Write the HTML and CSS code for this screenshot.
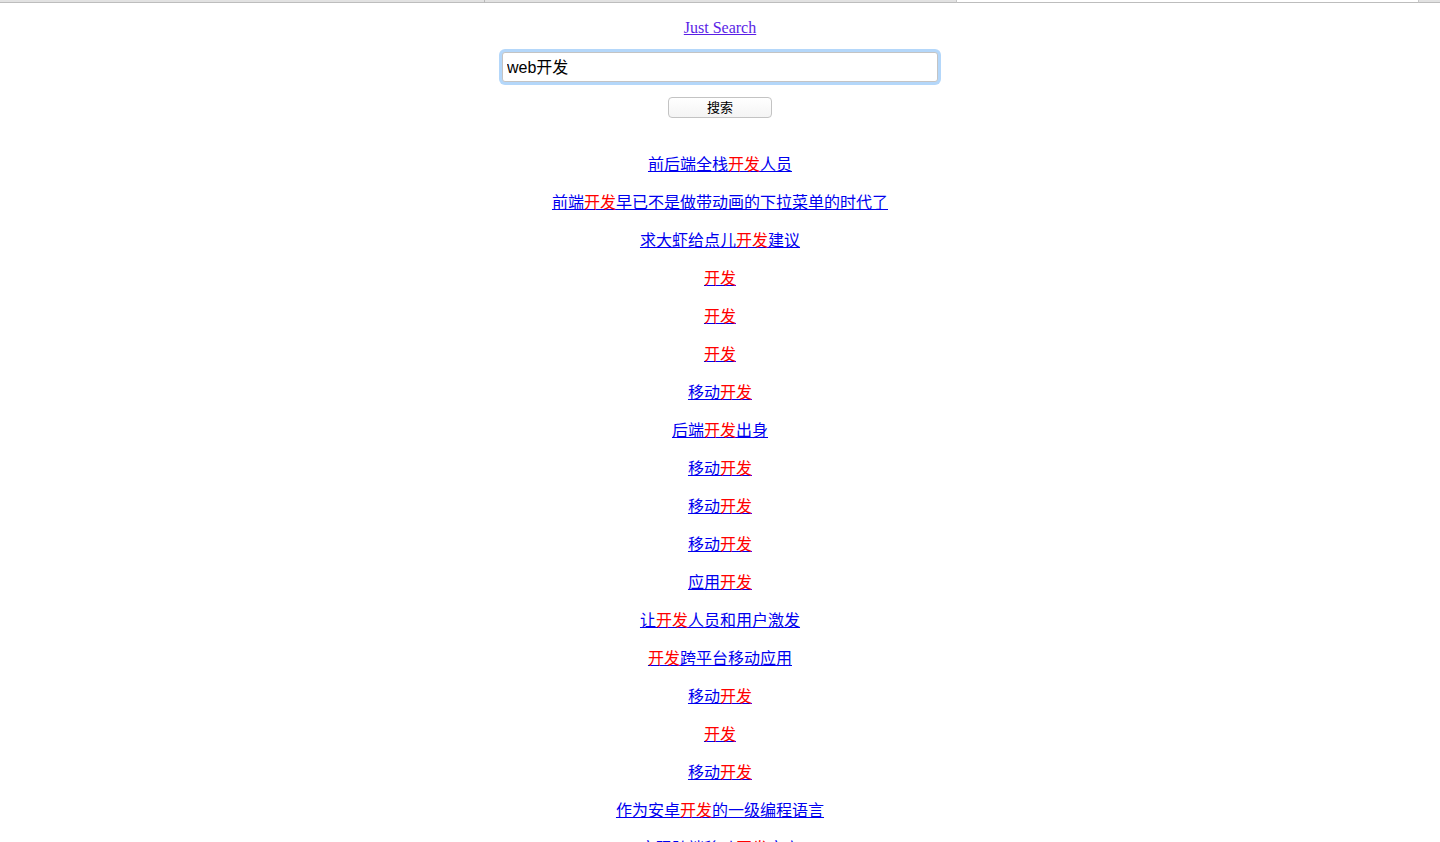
FILE: index.html
```html
<!DOCTYPE html>
<html lang="zh-CN">
<head>
<meta charset="utf-8">
<title>Just Search</title>
<link rel="stylesheet" href="styles.css">
</head>
<body>
<div class="tabbar">
  <div class="tab tab-first"></div>
  <div class="tab tab-second"></div>
  <div class="tab tab-active"></div>
  <div class="tab tab-rest"></div>
</div>
<main class="page">
  <a class="brand" href="#">Just Search</a>
  <form class="search">
    <input class="query" type="text" value="web开发">
    <button class="submit" type="button">搜索</button>
  </form>
  <ul class="results">
    <li><a href="#">前后端全栈<span class="hl">开发</span>人员</a></li>
    <li><a href="#">前端<span class="hl">开发</span>早已不是做带动画的下拉菜单的时代了</a></li>
    <li><a href="#">求大虾给点儿<span class="hl">开发</span>建议</a></li>
    <li><a href="#"><span class="hl">开发</span></a></li>
    <li><a href="#"><span class="hl">开发</span></a></li>
    <li><a href="#"><span class="hl">开发</span></a></li>
    <li><a href="#">移动<span class="hl">开发</span></a></li>
    <li><a href="#">后端<span class="hl">开发</span>出身</a></li>
    <li><a href="#">移动<span class="hl">开发</span></a></li>
    <li><a href="#">移动<span class="hl">开发</span></a></li>
    <li><a href="#">移动<span class="hl">开发</span></a></li>
    <li><a href="#">应用<span class="hl">开发</span></a></li>
    <li><a href="#">让<span class="hl">开发</span>人员和用户激发</a></li>
    <li><a href="#"><span class="hl">开发</span>跨平台移动应用</a></li>
    <li><a href="#">移动<span class="hl">开发</span></a></li>
    <li><a href="#"><span class="hl">开发</span></a></li>
    <li><a href="#">移动<span class="hl">开发</span></a></li>
    <li><a href="#">作为安卓<span class="hl">开发</span>的一级编程语言</a></li>
    <li><a href="#">实现跨端移动<span class="hl">开发</span>方案</a></li>
  </ul>
</main>
</body>
</html>
```

FILE: styles.css
```css
html, body {
  margin: 0;
  padding: 0;
  background: #ffffff;
}

body {
  font-family: "Liberation Serif", "Noto Sans CJK SC", serif;
  font-size: 16px;
  color: #000;
  overflow: hidden;
}

.tabbar {
  display: flex;
  height: 3px;
}

.tab {
  height: 2px;
  background: #e2e2e2;
  border-bottom: 1px solid #bdbdbd;
}

.tab-first {
  width: 484px;
  border-right: 1px solid #b8b8b8;
}

.tab-second {
  width: 471px;
  border-right: 1px solid #c8c8c8;
}

.tab-active {
  width: 461px;
  background: #ffffff;
  border-right: 1px solid #c8c8c8;
}

.tab-rest {
  flex: 1;
}

.page {
  display: flex;
  flex-direction: column;
  align-items: center;
  padding-top: 16px;
}

.brand {
  display: block;
  line-height: 18px;
  color: #5a1ee6;
}

.search {
  display: flex;
  flex-direction: column;
  align-items: center;
  margin-top: 15px;
}

.query {
  box-sizing: border-box;
  width: 436px;
  height: 30px;
  margin: 0;
  padding: 0 4px 3px;
  border: 1px solid #c4c4c4;
  border-radius: 3px;
  outline: none;
  box-shadow: 0 0 0 3px #b4d7fa;
  font-family: "Liberation Sans", "Noto Sans CJK SC", sans-serif;
  font-size: 16px;
  color: #000;
  background: #fff;
}

.submit {
  box-sizing: border-box;
  width: 104px;
  height: 21px;
  margin-top: 15px;
  padding: 0 0 2px;
  border: 1px solid #c3c3c3;
  border-radius: 4px;
  background: linear-gradient(#ffffff, #f4f4f4);
  font-family: "Noto Sans CJK SC", sans-serif;
  font-size: 13px;
  line-height: 17px;
  color: #000;
}

.results {
  list-style: none;
  margin: 36px 0 0;
  padding: 0;
  text-align: center;
}

.results li {
  line-height: 22px;
  margin-bottom: 16px;
}

.results a {
  color: #0000ee;
  text-decoration: underline #0000ee;
}

.hl {
  color: #ff0000;
  text-decoration: underline #0000ee;
}
```
